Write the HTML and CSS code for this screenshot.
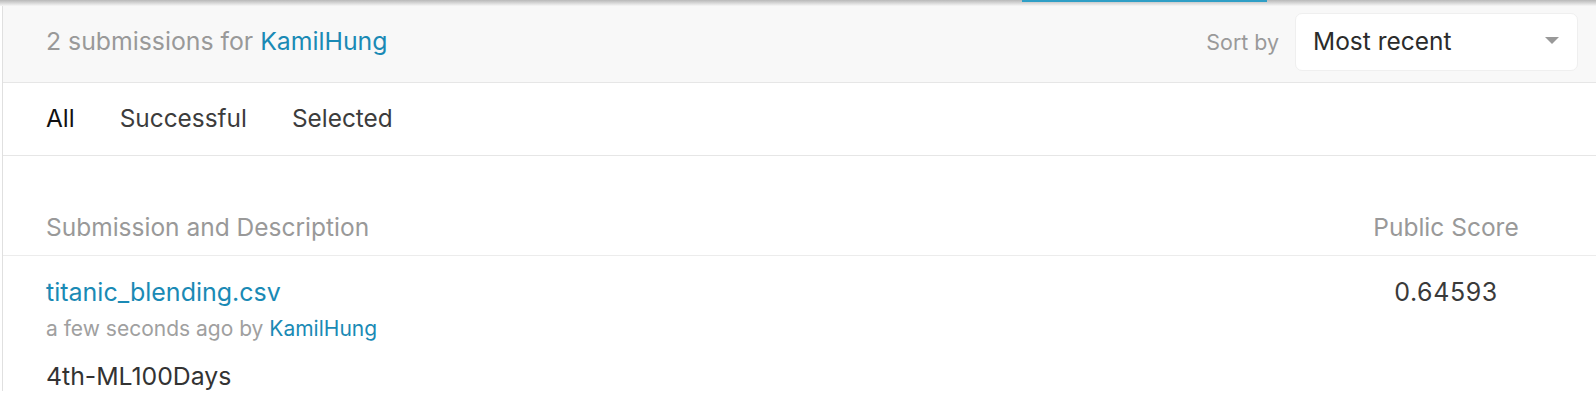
FILE: index.html
```html
<!DOCTYPE html>
<html>
<head>
<meta charset="utf-8">
<link rel="stylesheet" href="styles.css">
</head>
<body>
<div class="topshade"><div class="topline"></div></div>
<div class="panel">
  <div class="head">
    <div class="count">2 submissions for <a class="link">KamilHung</a></div>
    <div class="sort">
      <span class="sort-label">Sort by</span>
      <div class="select">
        <span>Most recent</span>
        <span class="caret"></span>
      </div>
    </div>
  </div>
  <div class="tabs">
    <span class="tab active">All</span>
    <span class="tab">Successful</span>
    <span class="tab">Selected</span>
  </div>
  <div class="table">
    <div class="thead">
      <span class="col-desc">Submission and Description</span>
      <span class="col-score">Public Score</span>
    </div>
    <div class="row">
      <div class="col-desc desc">
        <a class="link file">titanic_blending.csv</a>
        <div class="meta">a few seconds ago by <a class="link">KamilHung</a></div>
        <div class="note">4th-ML100Days</div>
      </div>
      <div class="col-score score">0.64593</div>
    </div>
  </div>
</div>
</body>
</html>
```
FILE: styles.css
```css
html, body {
  margin: 0;
  padding: 0;
  background: #ffffff;
  font-family: Inter, "Noto Sans", sans-serif;
  overflow: hidden;
}
.topshade {
  height: 6px;
  background: linear-gradient(#b8b8b8, #f6f6f6);
  position: relative;
}
.topline {
  position: absolute;
  left: 1022px;
  top: 0;
  width: 245px;
  height: 2px;
  background: #2f9fc6;
}
.panel {
  margin-left: 2px;
  border-left: 1px solid #e0e0e0;
}
.head {
  background: #f8f8f8;
  height: 76px;
  border-bottom: 1px solid #e6e6e6;
  display: flex;
  align-items: center;
  justify-content: space-between;
  padding: 0 18px 0 43px;
  margin-top: -6px;
  padding-top: 6px;
}
.count {
  font-size: 24.8px;
  color: #999999;
  margin-top: -6px;
}
.link {
  color: #1a8ab5;
  text-decoration: none;
}
.sort {
  display: flex;
  align-items: center;
  gap: 16px;
  margin-top: -5px;
}
.sort-label {
  font-size: 21.4px;
  color: #9a9a9a;
}
.select {
  width: 283px;
  height: 58px;
  box-sizing: border-box;
  background: #ffffff;
  border: 1px solid #efefef;
  border-radius: 7px;
  display: flex;
  align-items: center;
  justify-content: space-between;
  padding: 0 18px 2px 17px;
  font-size: 24.5px;
  color: #2b2b2b;
}
.caret {
  width: 0;
  height: 0;
  border-left: 7px solid transparent;
  border-right: 7px solid transparent;
  border-top: 7px solid #999999;
}
.tabs {
  height: 73px;
  box-sizing: border-box;
  border-bottom: 1px solid #e6e6e6;
  display: flex;
  align-items: center;
  gap: 45px;
  padding-left: 43px;
  padding-bottom: 2px;
}
.tab {
  font-size: 24.4px;
  color: #3c3c3c;
}
.tab.active {
  color: #111111;
}
.thead {
  height: 100px;
  box-sizing: border-box;
  border-bottom: 1px solid #ececec;
  display: flex;
  align-items: flex-end;
  padding: 0 70px 13px 43px;
  font-size: 24.5px;
  line-height: 30px;
  color: #999999;
}
.col-desc {
  flex: 1;
}
.col-score {
  width: 160px;
  text-align: center;
}
.row {
  display: flex;
  align-items: flex-start;
  padding: 21px 70px 0 43px;
}
.desc {
  display: flex;
  flex-direction: column;
}
.file {
  font-size: 25px;
  line-height: 30px;
}
.meta {
  font-size: 21px;
  line-height: 26px;
  color: #a0a0a0;
  margin-top: 9px;
}
.note {
  font-size: 24.8px;
  line-height: 30px;
  color: #333333;
  margin-top: 19px;
}
.score {
  font-size: 25px;
  line-height: 30px;
  color: #3a3a3a;
  letter-spacing: 0.6px;
}
```
